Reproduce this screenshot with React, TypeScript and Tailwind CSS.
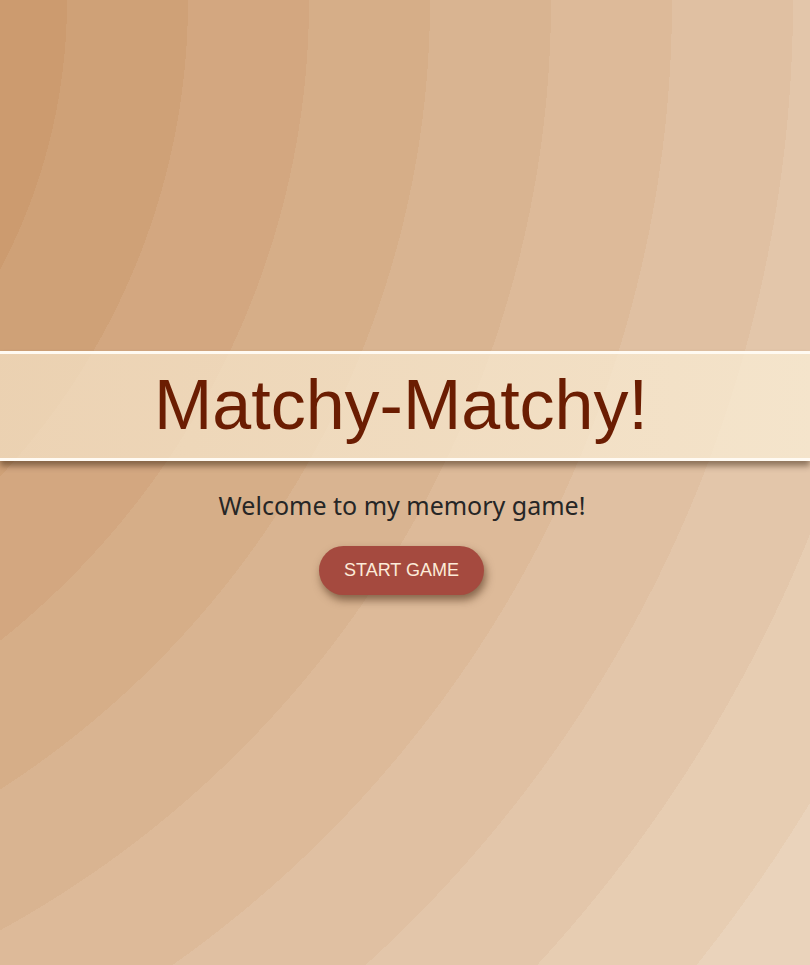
import React from 'react';

// Landing screen of the memory game
const App = () => {
  return (
    <div className="min-h-screen w-full flex flex-col items-center pt-[351px] bg-[radial-gradient(circle_at_-510px_0px,#cc9b6f_0px,#cc9b6f_577px,#cfa177_577px,#cfa177_698px,#d3a780_698px,#d3a780_819px,#d6ae88_819px,#d6ae88_940px,#d9b491_940px,#d9b491_1061px,#ddba99_1061px,#ddba99_1182px,#e0c0a2_1182px,#e0c0a2_1303px,#e3c6aa_1303px,#e3c6aa_1424px,#e7cdb2_1424px,#e7cdb2_1545px,#ead3bb_1545px,#ead3bb_1666px,#edd9c3_1666px)]">
      {/* Title banner */}
      <header className="w-full h-[110px] flex items-center justify-center border-y-[3px] border-[#fffaf2] bg-gradient-to-r from-[rgba(246,228,200,0.72)] to-[rgba(250,238,214,0.75)] shadow-[0_5px_6px_rgba(40,20,0,0.45)]">
        <h1 className="mr-[8px] font-['Liberation_Sans',Arial,sans-serif] text-[70px] leading-none text-[#6b1d02] pb-[2px]">
          Matchy-Matchy!
        </h1>
      </header>

      <p className="mt-[26px] mr-[6px] font-['Noto_Sans',sans-serif] text-[25px] leading-[36px] text-[#262626]">
        Welcome to my memory game!
      </p>

      <button className="mt-[23px] mr-[7px] w-[165px] h-[49px] rounded-full bg-[#a54a3f] text-[#fcebd8] font-['Liberation_Sans',Arial,sans-serif] text-[18px] shadow-[2px_5px_8px_rgba(60,30,10,0.55)]">
        START GAME
      </button>
    </div>
  );
};

export default App;
